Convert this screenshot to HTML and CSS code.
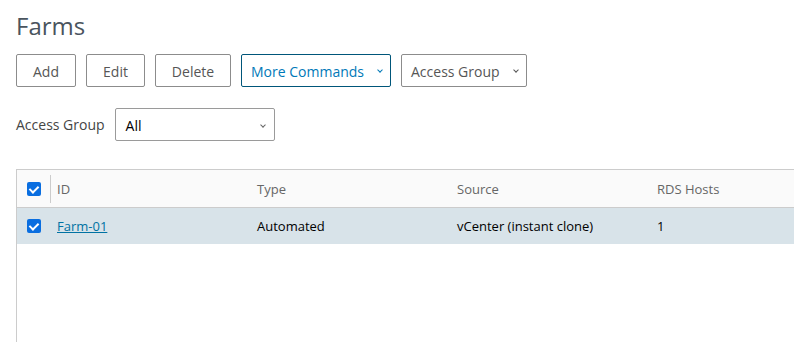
FILE: index.html
```html
<!DOCTYPE html>
<html lang="en">
<head>
    <meta charset="UTF-8">
    <meta name="viewport" content="width=device-width, initial-scale=1.0">
    <title>Farms</title>
    <link rel="stylesheet" href="styles.css">
</head>
<body>
    <div class="page">
        <h1>Farms</h1>

        <div class="toolbar">
            <button type="button" class="btn">Add</button>
            <button type="button" class="btn">Edit</button>
            <button type="button" class="btn">Delete</button>
            <button type="button" class="btn btn-primary btn-drop more">More Commands <span class="caret"></span></button>
            <button type="button" class="btn btn-drop access">Access Group <span class="caret"></span></button>
        </div>

        <div class="filter">
            <label>Access Group</label>
            <div class="select">All <span class="caret"></span></div>
        </div>

        <div class="grid">
            <div class="grid-row grid-head">
                <div class="cell cell-check"><span class="check"></span></div>
                <div class="cell cell-id">ID</div>
                <div class="cell">Type</div>
                <div class="cell">Source</div>
                <div class="cell">RDS Hosts</div>
            </div>
            <div class="grid-row selected">
                <div class="cell cell-check"><span class="check"></span></div>
                <div class="cell cell-id"><a href="#">Farm-01</a></div>
                <div class="cell">Automated</div>
                <div class="cell">vCenter (instant clone)</div>
                <div class="cell">1</div>
            </div>
        </div>
    </div>
</body>
</html>
```

FILE: styles.css
```css
body {
    font-family: 'Open Sans', 'Liberation Sans', sans-serif;
    background-color: #fff;
    margin: 0;
    overflow: hidden;
    color: #313131;
}

.page {
    padding: 10px 0 0 16px;
}

h1 {
    margin: 0;
    font-size: 24px;
    font-weight: 400;
    line-height: 32px;
    color: #4a545e;
}

.toolbar {
    display: flex;
    gap: 10px;
    margin-top: 12px;
}

.btn {
    height: 33px;
    padding: 1px 15px 0;
    font-family: inherit;
    font-size: 14px;
    color: #565656;
    background-color: #fff;
    border: 1px solid #8c8c8c;
    border-radius: 2px;
    display: flex;
    align-items: center;
    justify-content: center;
}

.btn:nth-child(1) { width: 60px; }
.btn:nth-child(2) { width: 59px; }
.btn:nth-child(3) { width: 76px; }

.btn-drop {
    justify-content: space-between;
    padding: 1px 6px 0 9px;
}

.btn-primary {
    color: #0079b8;
    border-color: #00567a;
}

.more { width: 150px; }
.access { width: 126px; }

.caret {
    width: 3px;
    height: 3px;
    border-right: 1px solid currentColor;
    border-bottom: 1px solid currentColor;
    transform: rotate(45deg);
    margin-top: -2px;
    margin-right: 2px;
}

.filter {
    display: flex;
    align-items: center;
    gap: 10px;
    margin-top: 21px;
}

.filter label {
    font-size: 14px;
    color: #454545;
}

.select {
    width: 160px;
    height: 33px;
    box-sizing: border-box;
    border: 1px solid #9a9a9a;
    border-radius: 2px;
    display: flex;
    align-items: center;
    justify-content: space-between;
    padding: 2px 7px 0 10px;
    font-size: 14px;
    color: #000;
}

.select .caret {
    color: #666;
}

.grid {
    margin-top: 28px;
    border-top: 1px solid #ccc;
    border-left: 1px solid #ccc;
    height: calc(100vh - 170px);
    box-sizing: border-box;
}

.grid-row {
    display: grid;
    grid-template-columns: 33px 200px 200px 200px 1fr;
    align-items: center;
    font-size: 13px;
}

.grid-head {
    height: 37px;
    background-color: #fafafa;
    border-bottom: 1px solid #ccc;
    color: #666;
}

.selected {
    height: 36px;
    background-color: #d8e3e9;
    color: #000;
}

.cell {
    padding-left: 7px;
    white-space: nowrap;
}

.cell-check {
    padding-left: 10px;
    display: flex;
    align-items: center;
    height: 100%;
}

.grid-head .cell-id {
    border-left: 1px solid #ccc;
    padding-left: 6px;
    height: 28px;
    display: flex;
    align-items: center;
}

.check {
    width: 14px;
    height: 14px;
    border-radius: 2px;
    background-color: #0a6ee0;
    position: relative;
}

.check::after {
    content: "";
    position: absolute;
    left: 4px;
    top: 2px;
    width: 4px;
    height: 7px;
    border-right: 2px solid #fff;
    border-bottom: 2px solid #fff;
    transform: rotate(45deg);
}

.cell a {
    color: #0072a3;
    text-decoration: underline;
}
```
